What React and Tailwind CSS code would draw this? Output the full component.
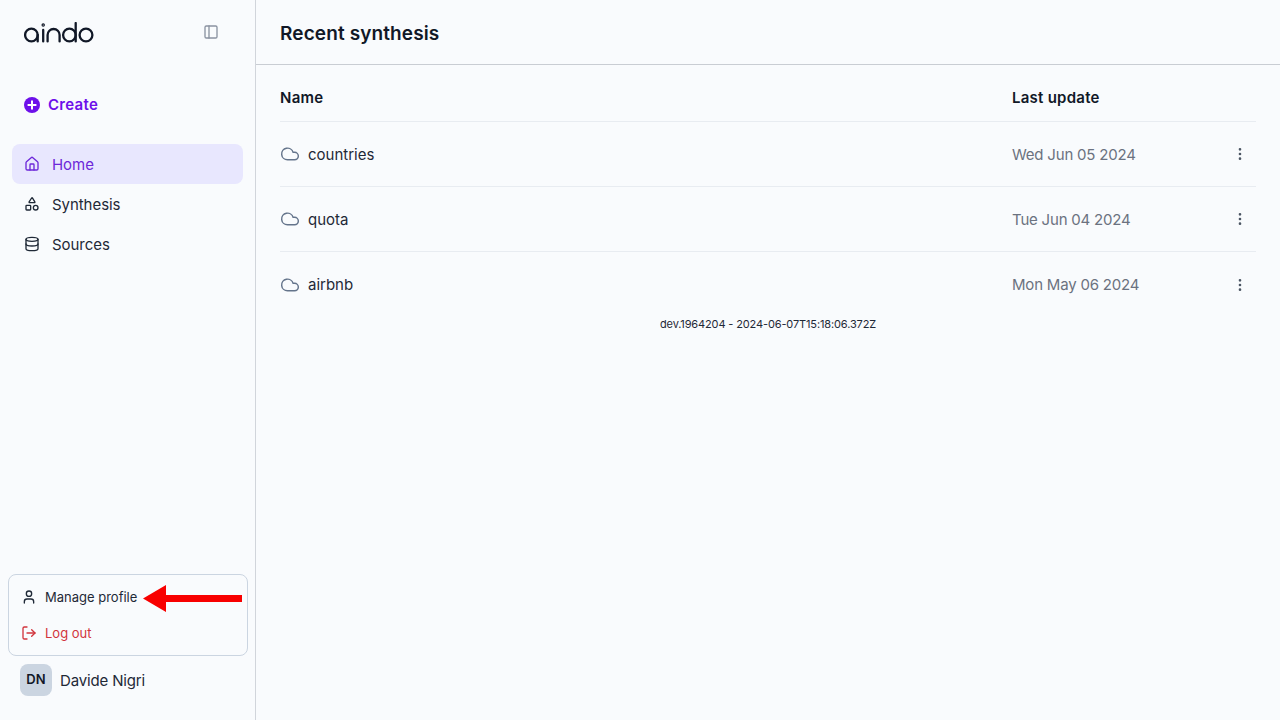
import React from "react";
import {
  House,
  Shapes,
  Database,
  Cloud,
  EllipsisVertical,
  User,
  LogOut,
  PanelLeft,
} from "lucide-react";

const rows = [
  { name: "countries", date: "Wed Jun 05 2024" },
  { name: "quota", date: "Tue Jun 04 2024" },
  { name: "airbnb", date: "Mon May 06 2024" },
];

const Logo = () => (
  <svg width="70" height="22" viewBox="0 0 70 22" fill="none" stroke="#111827" strokeWidth="2.3" strokeLinecap="round" aria-label="aindo">
    <circle cx="7.4" cy="13" r="6.3" />
    <path d="M13.7 13v6.4" />
    <path d="M19.2 8v11.4" />
    <circle cx="19.2" cy="3" r="0.6" />
    <path d="M23.6 19.4v-6.4a6 6 0 0 1 12 0v6.4" />
    <circle cx="45.4" cy="13" r="6.3" />
    <path d="M51.7 1v18.4" />
    <circle cx="62" cy="13" r="6.4" />
  </svg>
);

const CreateIcon = () => (
  <svg width="16" height="16" viewBox="0 0 16 16">
    <circle cx="8" cy="8" r="8" fill="#6d10ea" />
    <path d="M8 3.6v8.8M3.6 8h8.8" stroke="#fff" strokeWidth="2" />
  </svg>
);

const NavItem = ({ icon: Icon, label, active }) => (
  <div
    className={`flex items-center gap-3 h-10 px-3 rounded-lg text-[15px] ${
      active ? "bg-[#e8e7fe] text-[#6d28d9]" : "text-[#1f2937]"
    }`}
  >
    <Icon size={16} strokeWidth={2} />
    <span className="mt-[3px] tracking-[-0.05px]">{label}</span>
  </div>
);

export default function App() {
  return (
    <div
      className="relative flex h-[720px] w-[1280px] overflow-hidden bg-[#f9fbfd] text-[#111827]"
      style={{ fontFamily: "Inter, 'Noto Sans', sans-serif" }}
    >
      <aside className="flex w-[256px] shrink-0 flex-col border-r border-[#d1d5db]">
        <div className="flex h-[65px] items-center justify-between pl-6 pr-[36px]">
          <Logo />
          <PanelLeft size={16} strokeWidth={2} className="mt-[-2px] text-[#8b93a1]" />
        </div>
        <div className="mt-[29px] flex items-center gap-2 pl-6 text-[15px] font-semibold tracking-[0.3px] text-[#6d10ea]">
          <CreateIcon />
          <span>Create</span>
        </div>
        <nav className="mt-[27px] flex flex-col px-3">
          <NavItem icon={House} label="Home" active />
          <NavItem icon={Shapes} label="Synthesis" />
          <NavItem icon={Database} label="Sources" />
        </nav>
        <div className="mt-auto pb-6 pl-2 pr-[7px]">
          <div className="flex h-[82px] flex-col rounded-lg border border-[#cbd5e1] text-[13px]">
            <div className="flex h-[44px] items-center gap-2 pl-3 text-[#1f2937]">
              <User size={16} strokeWidth={2} />
              <span className="mt-[2px]">Manage profile</span>
            </div>
            <div className="flex h-[28px] items-center gap-2 pl-3 text-[#d1343c]">
              <LogOut size={16} strokeWidth={2} />
              <span className="mt-[2px]">Log out</span>
            </div>
          </div>
          <div className="mt-2 flex items-center gap-2 pl-3">
            <div className="flex h-8 w-8 items-center justify-center rounded-lg bg-[#cbd5e1] text-[13px] font-semibold">
              DN
            </div>
            <span className="mt-[2px] text-[15px] tracking-[-0.15px] text-[#1f2937]">Davide Nigri</span>
          </div>
        </div>
      </aside>

      <main className="flex min-w-0 flex-1 flex-col">
        <header className="flex h-[65px] items-center border-b border-[#c9cdd3] pl-6 pt-1 text-[19px] font-semibold tracking-[0.12px]">
          Recent synthesis
        </header>
        <div className="px-6">
          <div className="flex h-[57px] items-center border-b border-[#e8ecf1] pt-[11px] text-[15px] font-semibold tracking-[0.25px]">
            <div className="w-[732px]">Name</div>
            <div>Last update</div>
          </div>
          {rows.map((row, i) => (
            <div
              key={row.name}
              className={`flex h-[65px] items-center text-[15px] ${
                i < rows.length - 1 ? "border-b border-[#e8ecf1]" : ""
              }`}
            >
              <div className="flex w-[732px] items-center gap-2 text-[#1f2937]">
                <Cloud size={20} strokeWidth={1.75} className="text-[#64748b]" />
                <span className="mt-[2px]">{row.name}</span>
              </div>
              <div className="mt-[2px] flex-1 tracking-[-0.2px] text-[#6b7280]">{row.date}</div>
              <EllipsisVertical size={16} strokeWidth={2} className="mr-2 text-[#4b5563]" />
            </div>
          ))}
        </div>
        <div className="text-center text-[11px] leading-[14px] tracking-[-0.13px] text-[#1f2937]">
          dev.1964204 - 2024-06-07T15:18:06.372Z
        </div>
      </main>

      <svg className="absolute left-[143px] top-[585px]" width="100" height="28" viewBox="0 0 100 28">
        <path d="M0 13.5 23 0v10h76v7H23v10z" fill="#f80000" />
      </svg>
    </div>
  );
}
